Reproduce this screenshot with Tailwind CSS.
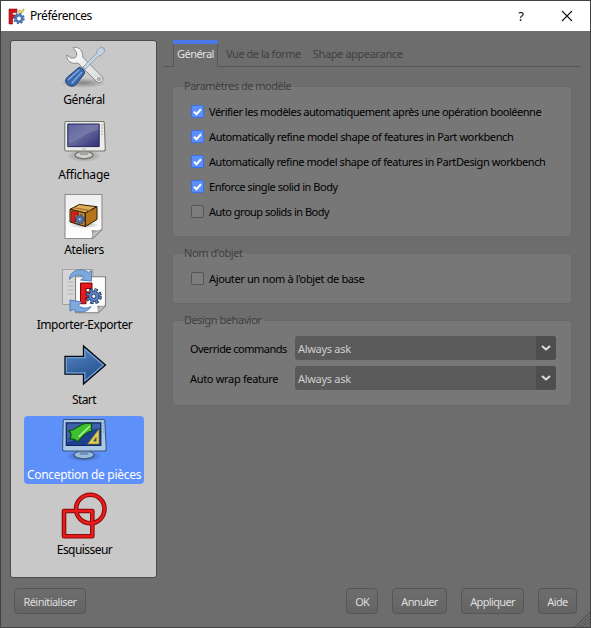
<!DOCTYPE html>
<html lang="fr">
<head>
<meta charset="utf-8">
<title>Préférences</title>
<script src="https://cdn.jsdelivr.net/npm/@tailwindcss/browser@4"></script>
</head>
<body class="w-[591px] h-[628px] overflow-hidden font-['Noto_Sans',sans-serif] text-[12px] leading-[16px] text-black">
<svg class="absolute w-0 h-0">
  <defs>
    <linearGradient id="steel" x1="0" y1="0" x2="1" y2="1"><stop offset="0" stop-color="#fff"/><stop offset="1" stop-color="#d8d8d8"/></linearGradient>
    <linearGradient id="navy" x1="0" y1="0" x2="1" y2="1"><stop offset="0" stop-color="#4c4f94"/><stop offset=".5" stop-color="#64679b"/><stop offset="1" stop-color="#2c2e73"/></linearGradient>
    <linearGradient id="arrow" x1="0" y1="0" x2="0.4" y2="1"><stop offset="0" stop-color="#5b8bc4"/><stop offset="1" stop-color="#24508f"/></linearGradient>
    <linearGradient id="paper" x1="0" y1="0" x2="0" y2="1"><stop offset="0" stop-color="#efefef"/><stop offset="1" stop-color="#fdfdfd"/></linearGradient>
    <linearGradient id="curl" x1="0" y1="0" x2="1" y2="1"><stop offset="0" stop-color="#777"/><stop offset=".6" stop-color="#eee"/><stop offset="1" stop-color="#bbb"/></linearGradient>
    <radialGradient id="shade"><stop offset="0" stop-color="#000" stop-opacity=".35"/><stop offset="1" stop-color="#000" stop-opacity="0"/></radialGradient>
    <symbol id="gear" viewBox="-10 -10 20 20">
      <circle r="7.6" fill="none" stroke="#14264a" stroke-width="4.4" stroke-dasharray="3.7 2.27"/>
      <circle r="6.4" fill="#5b84c4" stroke="#14264a" stroke-width="1"/>
      <circle r="7.4" fill="none" stroke="#5b84c4" stroke-width="2.8" stroke-dasharray="2.4 3.41" stroke-dashoffset="-.6"/>
      <circle r="2.6" fill="#e9edf5" stroke="#14264a" stroke-width="1"/>
    </symbol>
  </defs>
</svg>
<div class="w-full h-full flex flex-col border border-[#424242] bg-[#6d6d6d]">
  <header class="h-[30px] bg-white flex items-center pl-[7px] pr-[17px] shrink-0">
    <svg class="w-[17px] h-[17px] mr-[5px]" viewBox="0 0 17 17">
      <path d="M1 1h8v3.6H4.6V7h3v3.2h-3V16H1z" fill="#d2151b" stroke="#7d1317" stroke-width=".6"/>
      <path d="M10 4l1.5-2.5L13 3l3-2.5V3l-2.5 2.2L11.500 6z" fill="#e0d75a" stroke="#9b9a50" stroke-width=".4"/>
      <circle cx="11" cy="10.500" r="4.800" fill="none" stroke="#3f68a3" stroke-width="1.800" stroke-dasharray="1.900 1.870"/>
      <circle cx="11" cy="10.500" r="3.200" fill="none" stroke="#4a76b4" stroke-width="2.600"/>
    </svg>
    <span class="tracking-[-0.45px]">Préférences</span>
    <span class="ml-auto text-[13px] mr-[37px]">?</span>
    <svg class="w-[12px] h-[12px]" viewBox="0 0 12 12"><path d="M1 1l10 10M11 1L1 11" stroke="#111" stroke-width="1.100"/></svg>
  </header>

  <main class="h-[547px] flex pl-[9px] pt-[9px] shrink-0">
    <nav class="w-[147px] h-[538px] shrink-0 rounded-[3px] border border-[#4a4a4a] bg-[#c8c8c8] flex flex-col items-center gap-[7px]">
      <div class="w-[120px] h-[68px] flex flex-col items-center">
        <svg class="w-[48px] h-[48px] overflow-visible shrink-0" viewBox="0 0 48 48">
          <ellipse cx="23" cy="42" rx="23" ry="5" fill="url(#shade)"/>
          <path d="M13 6.500c5-1 9 2 9.500 7l.5 3 19.500 19.500c2 3-2.500 7.500-5.500 5L18 22c-5 1.500-10-1-11-5.500l-.2-2.500 4 3h4l2-2.500-.5-3.500z" fill="url(#steel)" stroke="#8b8b8b" stroke-width="1"/>
          <circle cx="39" cy="38" r="1.500" fill="#bbb" stroke="#888" stroke-width=".6"/>
          <path d="M23 26L37 12l-1-1 4-4.500 4 .5.500 4-4.500 4-1-.5-14 14z" fill="#c3d3e0" stroke="#8197ab" stroke-width=".8"/>
          <path d="M19 26.500c2-.5 6 2.500 5.500 6L16 43.500c-3 3-8 2-10-2-1-2 0-4 1.500-5.500z" fill="#3a69ad" stroke="#1d3f78" stroke-width="1"/>
          <path d="M19 29L8.500 38.500M21.500 31.500L12 42" stroke="#86abdd" stroke-width="1.300" stroke-linecap="round"/>
        </svg>
        <span class="pt-px pl-px leading-[20px] whitespace-nowrap tracking-[-0.4px]">Général</span>
      </div>
      <div class="w-[120px] h-[68px] flex flex-col items-center">
        <svg class="w-[48px] h-[48px] overflow-visible shrink-0" viewBox="0 0 48 48">
          <ellipse cx="24" cy="40" rx="17" ry="6" fill="url(#shade)"/>
          <ellipse cx="24" cy="39" rx="9" ry="3.800" fill="#cfd0cc" stroke="#6f726c" stroke-width="1.300"/>
          <path d="M19 35h10l-1 4h-8z" fill="#a4a69f"/>
          <path d="M6 5.500h37q1.300 0 1.300 1.500l1 26q0 2-2 2H6.500q-2 0-1.800-2L4.800 7q0-1.500 1.200-1.500z" fill="#ecece8" stroke="#74766f" stroke-width="1.100"/>
          <path d="M7.800 8h31.400v22.600H7.800z" fill="url(#navy)" stroke="#23255f" stroke-width="1"/>
          <path d="M8.500 27C20 25 22 17 38.500 14V8.500h-30z" fill="#fff" opacity=".12"/>
          <path d="M41 9h2M41 12h2M41 15h2M41 18h2" stroke="#999" stroke-width=".8"/>
          <path d="M22 33h4" stroke="#aaa" stroke-width=".8"/>
        </svg>
        <span class="pt-px pl-px leading-[20px] whitespace-nowrap tracking-[-0.2px]">Affichage</span>
      </div>
      <div class="w-[120px] h-[68px] flex flex-col items-center">
        <svg class="w-[48px] h-[48px] overflow-visible shrink-0" viewBox="0 0 48 48">
          <path d="M5 3.500h37v35l-9 9H5z" fill="url(#paper)" stroke="#8e8e8e" stroke-width="1.100"/>
          <path d="M42 38.500c-3 2-6 1.500-10 1 1 3 1 6-.5 8z" fill="url(#curl)" stroke="#888" stroke-width=".8"/>
          <ellipse cx="24" cy="34" rx="15" ry="3" fill="url(#shade)"/>
          <path d="M10 18.300l9.300-4.800L37 15.700 25.300 22z" fill="#e3ac57" stroke="#2c1a05" stroke-width="1"/>
          <path d="M10 18.300L25.300 22v13.500L10 31z" fill="#c98a2f" stroke="#2c1a05" stroke-width="1"/>
          <path d="M25.300 22L37 15.700V28.500l-11.700 7z" fill="#b5741b" stroke="#2c1a05" stroke-width="1"/>
          <path d="M14.500 16.200L31 19l-2 1.200-16.500-3z" fill="#a9772d"/>
          <path d="M11.500 20l7 1.600v3l-4-.9v2l3 .7v2.700l-3-.7v3.300l-3-1z" fill="#e01b1b" stroke="#600" stroke-width=".5"/>
          <use href="#gear" x="14.500" y="23" width="10.500" height="10.500"/>
        </svg>
        <span class="pt-px pl-px leading-[20px] whitespace-nowrap tracking-[-0.35px]">Ateliers</span>
      </div>
      <div class="w-[120px] h-[68px] flex flex-col items-center">
        <svg class="w-[48px] h-[48px] overflow-visible shrink-0" viewBox="0 0 48 48">
          <path d="M2.500 3.500H33v35H2.500z" fill="#d6d6d6" stroke="#a2a2a2" stroke-width="1"/>
          <path d="M7 16h6M7 20h6M7 24h6M7 28h6" stroke="#b4b4b4" stroke-width="1"/>
          <path d="M15.500 10.700h30v29l-7 7h-23z" fill="#fbfbfb" stroke="#7f7f7f" stroke-width="1.100"/>
          <path d="M45.500 39.500c-3 1-5 1-8 .5 1 2.500 1 5 0 7z" fill="url(#curl)" stroke="#888" stroke-width=".7"/>
          <path d="M20.500 17h11.500v5.500h-6v3.500h4v5.500h-4v6.200h-5.500z" fill="#e3191b" stroke="#74080a" stroke-width="1"/>
          <use href="#gear" x="25.500" y="22" width="16.500" height="16.500"/>
          <path d="M9.500 13.500C9 4 23 1 28.500 7l3-2.500v10.500L20.500 14l3.500-2.500C21 8 14 8 9.500 13.500z" fill="#7fa9dc" stroke="#4779b8" stroke-width=".9"/>
          <path d="M10 45V34l11.500 2-3 3.300C21 43 28 42.500 31 40.500 28 46.500 18 48 13.500 43.500z" fill="#7fa9dc" stroke="#4779b8" stroke-width=".9"/>
        </svg>
        <span class="pt-px pl-[2px] leading-[20px] whitespace-nowrap tracking-[-0.47px]">Importer-Exporter</span>
      </div>
      <div class="w-[120px] h-[68px] flex flex-col items-center">
        <svg class="w-[48px] h-[48px] overflow-visible shrink-0" viewBox="0 0 48 48">
          <path d="M5 15.300h18.500V5L45.500 24l-22 19V33.200H5z" fill="url(#arrow)" stroke="#05080f" stroke-width="1.300"/>
          <path d="M6.400 16.700h18.500V8.200L43.300 24 24.900 39.900v-8.100H6.400z" fill="none" stroke="#719fd3" stroke-width="1.200"/>
        </svg>
        <span class="pt-px pl-px leading-[20px] whitespace-nowrap tracking-[-0.6px]">Start</span>
      </div>
      <div class="w-[120px] h-[68px] rounded-[4px] bg-[#5e90fa] text-white flex flex-col items-center">
        <svg class="w-[48px] h-[48px] overflow-visible shrink-0" viewBox="0 0 48 48">
          <ellipse cx="24" cy="40" rx="18" ry="6" fill="url(#shade)"/>
          <ellipse cx="24" cy="38.800" rx="10" ry="4" fill="#9dbbdd" stroke="#3d5c86" stroke-width="1.200"/>
          <path d="M19 35h10l-1 4h-8z" fill="#6f91bb"/>
          <path d="M4.500 3.500h39q1.200 0 1.300 1.500l1.500 28q0 2-2 2H4.500q-2 0-1.900-2L3.200 5q0-1.500 1.300-1.500z" fill="#a9c8e6" stroke="#3c587c" stroke-width="1.100"/>
          <path d="M6.300 6.800h34.500v22.700H6.300z" fill="#1c3f8f" stroke="#14235f" stroke-width="1.200"/>
          <path d="M7 26C20 24 26 14 40 12V7.500H7z" fill="#7ca0dd" opacity=".35"/>
          <path d="M8.500 14.500C14 15.500 19 8.500 25 7.500c3-.5 5-.3 6.800.3-1 3 .2 5.500 0 7.500-6 .5-9 5-14 10.500-2-2-4-3.500-8.300-3 2.500-3 2-6-1-8.300z" fill="#3fc12d" stroke="#0b4a14" stroke-width="1.100"/>
          <path d="M18.500 21L30 10" stroke="#c8f5b4" stroke-width="1.200"/>
          <path d="M27.500 28L39 13v15zM33.500 25.200h2.700v-4z" fill="#e0cd53" stroke="#75702c" stroke-width=".6" fill-rule="evenodd"/>
          <path d="M42.500 7h2M42.500 10h2M42.500 13h2M42.500 16h2" stroke="#6787ad" stroke-width=".8"/>
        </svg>
        <span class="pt-px pl-px leading-[20px] whitespace-nowrap tracking-[-0.3px]">Conception de pièces</span>
      </div>
      <div class="w-[120px] h-[68px] flex flex-col items-center">
        <svg class="w-[48px] h-[48px] overflow-visible shrink-0" viewBox="0 0 48 48" fill="none">
          <rect x="4" y="20" width="28.300" height="25.300" stroke="#8d0b0b" stroke-width="4.600" stroke-linejoin="round"/>
          <circle cx="30.300" cy="18" r="14.200" stroke="#8d0b0b" stroke-width="4.600"/>
          <rect x="4" y="20" width="28.300" height="25.300" stroke="#ea1c1c" stroke-width="2.400"/>
          <circle cx="30.300" cy="18" r="14.200" stroke="#ea1c1c" stroke-width="2.400"/>
        </svg>
        <span class="pt-px pl-[2px] leading-[20px] whitespace-nowrap tracking-[-0.55px]">Esquisseur</span>
      </div>
    </nav>

    <section class="ml-[6px] w-[418px] flex flex-col text-[11px]">
      <div class="h-[27px] flex border-b border-[#565656] pl-[10px] text-[#404040] whitespace-nowrap">
        <div class="w-[45px] h-[27px] bg-[#6d6d6d] border-x border-[#565656] flex flex-col text-[#e2e2e2]">
          <div class="h-[4px] -mx-px bg-[#4a78e8] shrink-0"></div>
          <span class="pl-[3px] pt-[2px] tracking-[-0.53px]">Général</span>
        </div>
        <span class="ml-[8px] pt-[6px] tracking-[-0.45px]">Vue de la forme</span>
        <span class="ml-[12px] pt-[6px] tracking-[-0.37px]">Shape appearance</span>
      </div>

      <div class="mt-[19px] ml-[9px] w-[400px] h-[151px] rounded-[4px] border border-[#6a6a6a] bg-[#777] flex flex-col pl-[18px] whitespace-nowrap">
        <span class="-mt-[9px] -ml-[7px] pr-[3px] h-[16px] self-start bg-linear-to-b from-[#6d6d6d] from-50% to-[#777] to-50% text-[#404040] tracking-[-0.5px]">Paramètres de modèle</span>
        <div class="mt-[5px] flex flex-col">
          <label class="h-[25px] flex items-center"><svg class="w-[13px] h-[13px] mr-[5px] shrink-0" viewBox="0 0 13 13"><rect x=".5" y=".5" width="12" height="12" rx="1.500" fill="#5b8ffb" stroke="#3c6fe6"/><path d="M3 6.800l2.400 2.400L10 4.200" fill="none" stroke="#fff" stroke-width="2"/></svg><span class="tracking-[-0.48px]">Vérifier les modèles automatiquement après une opération booléenne</span></label>
          <label class="h-[25px] flex items-center"><svg class="w-[13px] h-[13px] mr-[5px] shrink-0" viewBox="0 0 13 13"><rect x=".5" y=".5" width="12" height="12" rx="1.500" fill="#5b8ffb" stroke="#3c6fe6"/><path d="M3 6.800l2.400 2.400L10 4.200" fill="none" stroke="#fff" stroke-width="2"/></svg><span class="tracking-[-0.4px]">Automatically refine model shape of features in Part workbench</span></label>
          <label class="h-[25px] flex items-center"><svg class="w-[13px] h-[13px] mr-[5px] shrink-0" viewBox="0 0 13 13"><rect x=".5" y=".5" width="12" height="12" rx="1.500" fill="#5b8ffb" stroke="#3c6fe6"/><path d="M3 6.800l2.400 2.400L10 4.200" fill="none" stroke="#fff" stroke-width="2"/></svg><span class="tracking-[-0.42px]">Automatically refine model shape of features in PartDesign workbench</span></label>
          <label class="h-[25px] flex items-center"><svg class="w-[13px] h-[13px] mr-[5px] shrink-0" viewBox="0 0 13 13"><rect x=".5" y=".5" width="12" height="12" rx="1.500" fill="#5b8ffb" stroke="#3c6fe6"/><path d="M3 6.800l2.400 2.400L10 4.200" fill="none" stroke="#fff" stroke-width="2"/></svg><span class="tracking-[-0.46px]">Enforce single solid in Body</span></label>
          <label class="h-[25px] flex items-center"><span class="w-[13px] h-[13px] mr-[5px] shrink-0 rounded-[2px] border border-[#565656] bg-[#7d7d7d]"></span><span class="tracking-[-0.5px]">Auto group solids in Body</span></label>
        </div>
      </div>

      <div class="mt-[16px] ml-[9px] w-[400px] h-[51px] rounded-[4px] border border-[#6a6a6a] bg-[#777] flex flex-col pl-[18px] whitespace-nowrap">
        <span class="-mt-[9px] -ml-[7px] pr-[3px] h-[16px] self-start bg-linear-to-b from-[#6d6d6d] from-50% to-[#777] to-50% text-[#404040] tracking-[-0.42px]">Nom d'objet</span>
        <label class="mt-[5px] h-[25px] flex items-center"><span class="w-[13px] h-[13px] mr-[5px] shrink-0 rounded-[2px] border border-[#565656] bg-[#7d7d7d]"></span><span class="tracking-[-0.37px]">Ajouter un nom à l'objet de base</span></label>
      </div>

      <div class="mt-[16px] ml-[9px] w-[400px] h-[86px] rounded-[4px] border border-[#6a6a6a] bg-[#777] flex flex-col pl-[17px] whitespace-nowrap">
        <span class="-mt-[9px] -ml-[6px] pr-[3px] h-[16px] self-start bg-linear-to-b from-[#6d6d6d] from-50% to-[#777] to-50% text-[#404040] tracking-[-0.46px]">Design behavior</span>
        <div class="mt-[8px] flex flex-col gap-[6px]">
          <div class="h-[24px] flex items-center"><span class="w-[105px] pt-px tracking-[-0.53px]">Override commands</span>
            <div class="w-[261px] h-[24px] rounded-[3px] overflow-hidden bg-[#5a5a5a] flex items-center text-[#cfcfcf]"><span class="pl-[3px] pt-px flex-1 tracking-[-0.3px]">Always ask</span><span class="w-[20px] h-full bg-[#4e4e4e] flex items-center justify-center"><svg class="w-[10px] h-[6px]" viewBox="0 0 10 6"><path d="M1 1l4 3.500L9 1" fill="none" stroke="#dedede" stroke-width="2"/></svg></span></div></div>
          <div class="h-[24px] flex items-center"><span class="w-[105px] pt-px tracking-[-0.32px]">Auto wrap feature</span>
            <div class="w-[261px] h-[24px] rounded-[3px] overflow-hidden bg-[#5a5a5a] flex items-center text-[#cfcfcf]"><span class="pl-[3px] pt-px flex-1 tracking-[-0.3px]">Always ask</span><span class="w-[20px] h-full bg-[#4e4e4e] flex items-center justify-center"><svg class="w-[10px] h-[6px]" viewBox="0 0 10 6"><path d="M1 1l4 3.500L9 1" fill="none" stroke="#dedede" stroke-width="2"/></svg></span></div></div>
        </div>
      </div>
    </section>
  </main>

  <footer class="relative flex-1 flex items-start pt-[10px] pl-[13px] pr-[13px] text-[11px] text-[#dedede] whitespace-nowrap">
    <button class="w-[72px] h-[26px] rounded-[4px] border border-[#565656] bg-linear-to-b from-[#6d6d6d] to-[#646464] pt-px tracking-[-0.54px] mr-auto">Réinitialiser</button>
    <button class="w-[32px] h-[26px] rounded-[4px] border border-[#565656] bg-linear-to-b from-[#6d6d6d] to-[#646464] pt-px tracking-[-0.9px]">OK</button>
    <button class="ml-[14px] w-[55px] h-[26px] rounded-[4px] border border-[#565656] bg-linear-to-b from-[#6d6d6d] to-[#646464] pt-px tracking-[-0.65px]">Annuler</button>
    <button class="ml-[14px] w-[63px] h-[26px] rounded-[4px] border border-[#565656] bg-linear-to-b from-[#6d6d6d] to-[#646464] pt-px tracking-[-0.65px]">Appliquer</button>
    <button class="ml-[14px] w-[39px] h-[26px] rounded-[4px] border border-[#565656] bg-linear-to-b from-[#6d6d6d] to-[#646464] pt-px tracking-[-0.6px]">Aide</button>
    <svg class="absolute right-0 bottom-0 w-[15px] h-[15px]" viewBox="0 0 15 15"><path d="M0 15L15 0M3.500 15L15 3.500M7 15l8-8M10.500 15l4.500-4.500" stroke="#4a4a4a" stroke-width="1"/></svg>
  </footer>
</div>
</body>
</html>
